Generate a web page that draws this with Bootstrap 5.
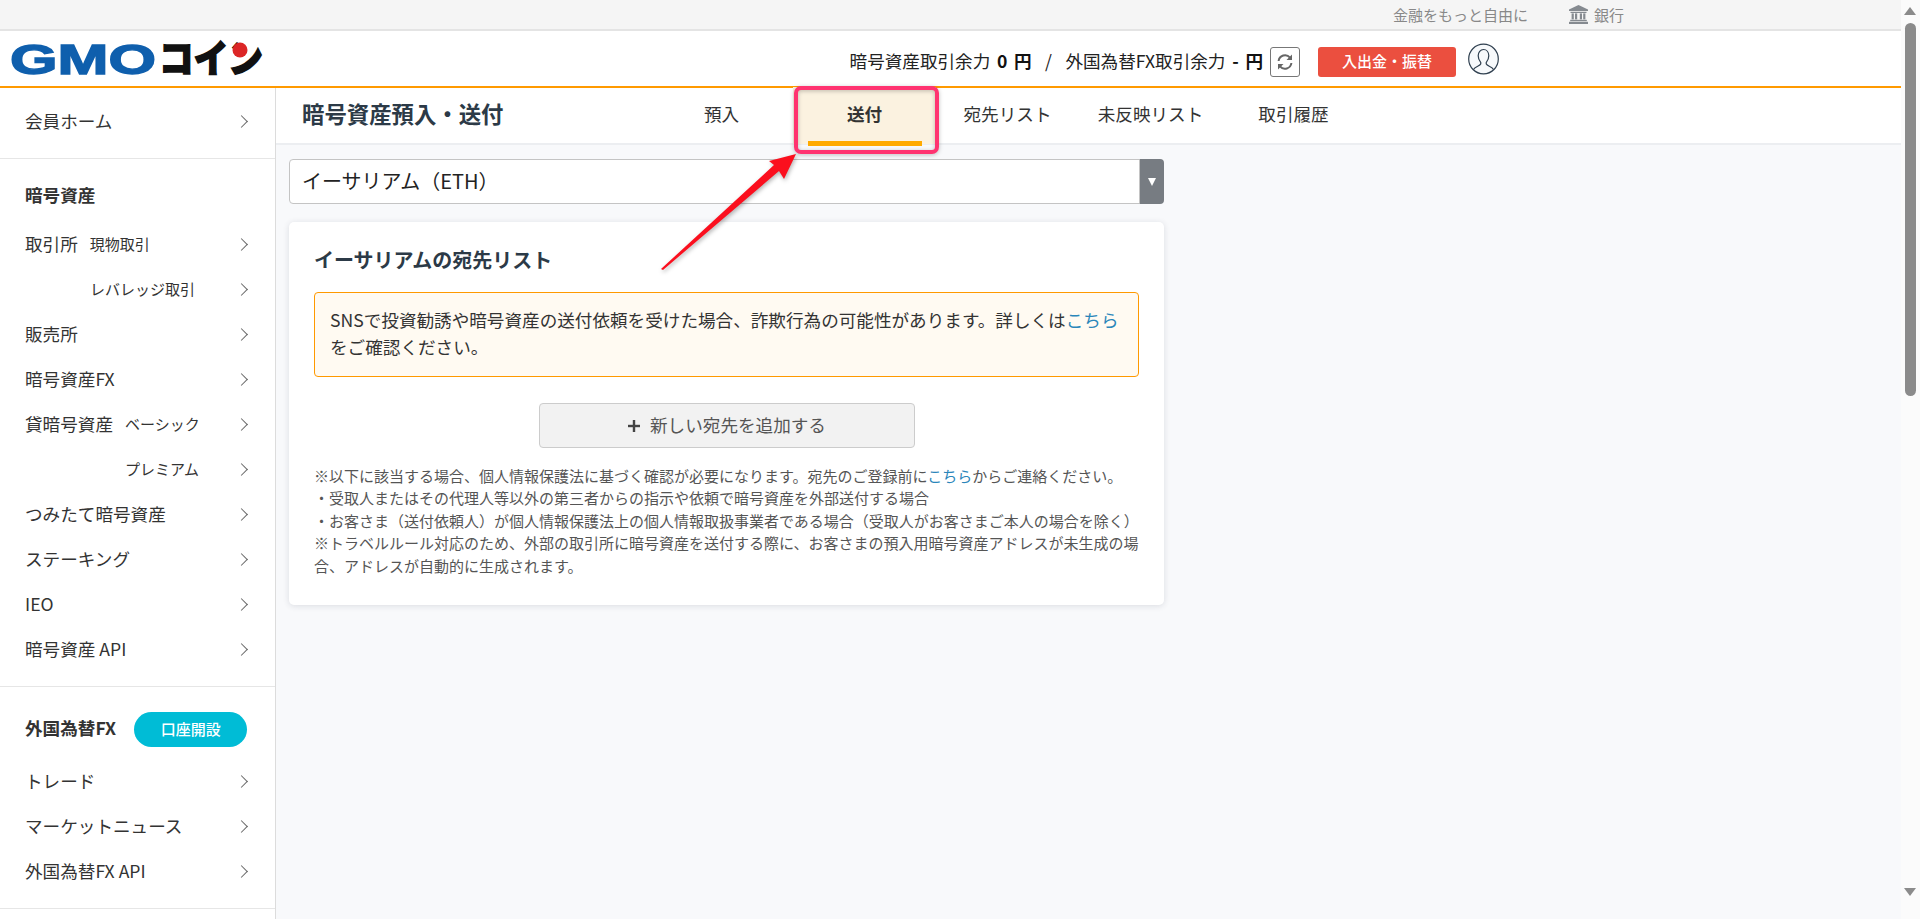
<!DOCTYPE html>
<html lang="ja">
<head>
  <meta charset="UTF-8" />
  <title>暗号資産預入・送付 | GMOコイン</title>
  <link href="https://cdn.jsdelivr.net/npm/bootstrap@5.3.0/dist/css/bootstrap.min.css" rel="stylesheet">
  <style>
    html, body { height: 100%; overflow: hidden; }
    body { font-family: "Noto Sans CJK JP", "Noto Sans", sans-serif; font-size: 17.6px; color: #333; background: #fff; }
    a { text-decoration: none; color: #2a86ba; }

    .app-shell { height: 919px; }
    .app-main { width: 1901px; position: relative; }

    /* fake scrollbar, the window scrolls in the original */
    .fake-scroll { width: 19px; background: #fbfbfb; }
    .fake-thumb { width: 11px; height: 373px; margin: 8px 0 0 4px; background: #8b8b8b; border-radius: 6px; }
    .arrow-up, .arrow-down { width: 0; margin: 7px 0 0 3px; border-left: 6.5px solid transparent; border-right: 6.5px solid transparent; }
    .arrow-up { border-bottom: 8px solid #8b8b8b; }
    .arrow-down { border-top: 8px solid #8b8b8b; margin-top: 492px; }

    .top-strip { height: 31px; background: #f5f5f5; border-bottom: 2px solid #e4e4e4; padding-right: 277px; font-size: 15px; color: #888; line-height: 29px; }
    .strip-bank { margin-left: 41px; }
    .strip-bank svg { margin-right: 6px; }

    .head-bar { height: 57px; border-bottom: 2px solid #ff9a00; padding: 0 402px 0 10px; background: #fff; }
    .logo-svg { overflow: visible; }
    .head-right { margin-top: 6px; }
    .balance { color: #222; margin-right: 7px; white-space: pre; word-spacing: 2.75px; }
    .balance b { color: #111; }
    .btn-refresh { width: 30px; height: 30px; padding: 0; border: 1px solid #777; border-radius: 3px; background: #fff; margin-right: 18px; }
    .btn-deposit { width: 138px; height: 30px; padding: 0; border: 0; border-radius: 3px; background: #eb4f3f; color: #fff; font-size: 15px; font-weight: 500; margin-right: 12px; }
    .btn-deposit:hover { background: #eb4f3f; color: #fff; }
    .user-icon { margin-top: -6px; }

    .side-panel { width: 276px; height: 831px; flex: none; border-right: 1px solid #dcdcdc; background: #fff; overflow: hidden; }
    .side-group { border-bottom: 1px solid #e6e6e6; }
    .side-home { padding: 11px 0 14px; }
    .side-crypto { padding: 14px 0 14px; }
    .side-fx { padding: 19px 0 14px; }
    .side-title { height: 45px; padding-left: 25px; font-weight: 700; margin-bottom: 4px; }
    .side-fx .side-title { margin-bottom: 8px; }
    .side-row { height: 45px; padding: 0 29px 0 25px; color: #333; }
    .side-row::after { content: ""; margin-left: auto; width: 9px; height: 9px; border-top: 1.3px solid #666; border-right: 1.3px solid #666; transform: rotate(45deg); }
    .sub-label { font-size: 15px; margin-left: 12px; }
    .sub-ex { margin-left: 65px; }
    .sub-loan { margin-left: 100px; }
    .btn-open { width: 113px; height: 35px; padding: 0; margin: 2px 0 0 18px; border: 0; border-radius: 18px; background: #00bcd6; color: #fff; font-size: 15px; font-weight: 500; }
    .btn-open:hover { background: #00bcd6; color: #fff; }

    .content-area { background: #f8f9fb; }
    .tab-bar { height: 57px; background: #fff; border-bottom: 2px solid #eceef1; }
    .page-title { width: 374px; padding-left: 26px; font-size: 22.4px; font-weight: 700; margin: -4px 0 0; color: #2c3a47; }
    .tab-link { width: 143px; height: 57px; line-height: 54px; text-align: center; color: #333; }
    .tab-link.is-on { background: #fbf2e0; font-weight: 700; position: relative; }
    .tab-link.is-on::after { content: ""; position: absolute; left: 15px; right: 14px; bottom: -2px; height: 5px; background: #ffaa00; }

    .content-col { width: 875px; margin: 14px 0 0 13px; }
    .coin-select { height: 45px; font-size: 20px; padding: 0 12px 2px; border: 1px solid #c4c4c4; border-radius: 4px 0 0 4px; background-image: none; color: #222; }
    .coin-caret { width: 25px; padding: 0; justify-content: center; background: #777c82; border: 0; border-radius: 0 4px 4px 0; }
    .coin-caret::before { content: ""; border-left: 4.5px solid transparent; border-right: 4.5px solid transparent; border-top: 8px solid #fff; }

    .dest-card { margin-top: 18px; height: 383px; border: 0; border-radius: 5px; box-shadow: 0 1px 6px rgba(40, 50, 70, .14); padding: 25px; }
    .dest-heading { font-size: 20px; font-weight: 700; margin: 0 0 19px; line-height: 26px; color: #2c3a47; }
    .warn-box { height: 85px; margin: 0 0 26px; padding: 14px 15px; background: #fffaf2; border: 1px solid #f90; border-radius: 4px; color: #333; line-height: 26.6px; }
    .warn-box a { color: #2a86ba; }
    .btn-add { display: flex; width: 376px; height: 45px; margin: 0 auto 17px; padding: 0; align-items: center; justify-content: center; background: #f2f2f2; border: 1px solid #ccc; border-radius: 4px; color: #555; font-size: 17.6px; }
    .btn-add svg { margin-right: 9px; }
    .note-text { font-size: 15px; line-height: 22.4px; color: #555; }

    .callout-layer { position: absolute; left: 0; top: 0; pointer-events: none; }
    .callout-arrow { filter: drop-shadow(1px 2px 2px rgba(0, 0, 0, .3)); }
    .callout-box { filter: drop-shadow(0 1px 2px rgba(0, 0, 0, .25)); }
  </style>
</head>
<body>
<div class="app-shell d-flex">
  <div class="app-main">
    <!-- top strip -->
    <div class="top-strip d-flex justify-content-end">
      <span>金融をもっと自由に</span>
      <span class="strip-bank d-flex align-items-center">
        <svg width="19" height="19" viewBox="0 0 19 19" fill="#858a90">
          <path d="M9.5 0 19 4.6V6H0V4.6z"/>
          <rect x="1.5" y="6.8" width="16" height="1.2"/>
          <rect x="2.6" y="8.4" width="2.2" height="6"/><rect x="6" y="8.4" width="2.2" height="6"/>
          <rect x="10.8" y="8.4" width="2.2" height="6"/><rect x="14.2" y="8.4" width="2.2" height="6"/>
          <rect x="1.2" y="14.8" width="16.6" height="1.4"/><rect x="0" y="16.8" width="19" height="2.2"/>
        </svg>銀行
      </span>
    </div>

    <!-- header -->
    <div class="head-bar d-flex align-items-center">
      <svg class="logo-svg" width="253" height="36" viewBox="0 0 253 36">
        <text x="0" y="33" font-family="Liberation Sans" font-weight="700" font-size="42" fill="#0f5fad" stroke="#0f5fad" stroke-width="1.4" textLength="146" lengthAdjust="spacingAndGlyphs">GMO</text>
        <text x="149" y="31" font-family="Noto Sans CJK JP" font-weight="900" font-size="38" fill="#111" stroke="#111" stroke-width="1.6" textLength="104" lengthAdjust="spacingAndGlyphs">コイン</text>
        <circle cx="230" cy="9" r="7.5" fill="#dc2626"/>
      </svg>
      <div class="head-right ms-auto d-flex align-items-center">
        <span class="balance">暗号資産取引余力 <b>0 円</b>  /  外国為替FX取引余力 <b>- 円</b></span>
        <button class="btn-refresh d-flex align-items-center justify-content-center" type="button" aria-label="更新">
          <svg width="18" height="18" viewBox="0 0 18 18" fill="none" stroke="#666" stroke-width="2">
            <path d="M2.6 8A6.5 6.5 0 0 1 14 4.6"/><path d="M15.4 10A6.5 6.5 0 0 1 4 13.4"/>
            <path d="M16 1.5V7h-5.5z" fill="#666" stroke="none"/><path d="M2 16.5V11h5.5z" fill="#666" stroke="none"/>
          </svg>
        </button>
        <button class="btn btn-deposit" type="button">入出金・振替</button>
        <svg class="user-icon" width="31" height="32" viewBox="0 0 31 32" fill="none" stroke="#2f3f4f" stroke-width="1.2">
          <circle cx="15.5" cy="16" r="14.8" fill="#f7f9fb"/>
          <path d="M5.5 26.5c1.4-3 6.3-3.4 7.2-5.4.3-.8.2-1.7-.3-2.3-1.3-1.6-2.2-3.7-2.2-6 0-3.7 2.2-6.3 5.3-6.3s5.3 2.6 5.3 6.3c0 2.3-.9 4.4-2.2 6-.5.6-.6 1.5-.3 2.3.9 2 5.8 2.4 7.2 5.4"/>
        </svg>
      </div>
    </div>

    <div class="d-flex">
      <!-- side menu -->
      <nav class="side-panel">
        <div class="side-group side-home">
          <a class="side-row d-flex align-items-center" href="#">会員ホーム</a>
        </div>
        <div class="side-group side-crypto">
          <div class="side-title d-flex align-items-center">暗号資産</div>
          <a class="side-row d-flex align-items-center" href="#">取引所<span class="sub-label">現物取引</span></a>
          <a class="side-row d-flex align-items-center" href="#"><span class="sub-label sub-ex">レバレッジ取引</span></a>
          <a class="side-row d-flex align-items-center" href="#">販売所</a>
          <a class="side-row d-flex align-items-center" href="#">暗号資産FX</a>
          <a class="side-row d-flex align-items-center" href="#">貸暗号資産<span class="sub-label">ベーシック</span></a>
          <a class="side-row d-flex align-items-center" href="#"><span class="sub-label sub-loan">プレミアム</span></a>
          <a class="side-row d-flex align-items-center" href="#">つみたて暗号資産</a>
          <a class="side-row d-flex align-items-center" href="#">ステーキング</a>
          <a class="side-row d-flex align-items-center" href="#">IEO</a>
          <a class="side-row d-flex align-items-center" href="#">暗号資産 API</a>
        </div>
        <div class="side-group side-fx">
          <div class="side-title d-flex align-items-center">外国為替FX<button class="btn btn-open" type="button">口座開設</button></div>
          <a class="side-row d-flex align-items-center" href="#">トレード</a>
          <a class="side-row d-flex align-items-center" href="#">マーケットニュース</a>
          <a class="side-row d-flex align-items-center" href="#">外国為替FX API</a>
        </div>
      </nav>

      <!-- main content -->
      <main class="content-area flex-grow-1">
        <div class="tab-bar d-flex align-items-center">
          <h1 class="page-title">暗号資産預入・送付</h1>
          <a class="tab-link" href="#">預入</a>
          <a class="tab-link is-on" href="#">送付</a>
          <a class="tab-link" href="#">宛先リスト</a>
          <a class="tab-link" href="#">未反映リスト</a>
          <a class="tab-link" href="#">取引履歴</a>
        </div>

        <div class="content-col">
          <div class="input-group">
            <select class="form-select coin-select">
              <option>イーサリアム（ETH）</option>
            </select>
            <span class="input-group-text coin-caret"></span>
          </div>

          <div class="card dest-card">
            <h2 class="dest-heading">イーサリアムの宛先リスト</h2>
            <div class="alert warn-box">SNSで投資勧誘や暗号資産の送付依頼を受けた場合、詐欺行為の可能性があります。詳しくは<a href="#">こちら</a>をご確認ください。</div>
            <button class="btn btn-add" type="button">
              <svg width="14" height="14" viewBox="0 0 14 14" fill="#444"><rect x="5.8" y="1" width="2.4" height="12"/><rect x="1" y="5.8" width="12" height="2.4"/></svg>新しい宛先を追加する
            </button>
            <div class="note-text">
              ※以下に該当する場合、個人情報保護法に基づく確認が必要になります。宛先のご登録前に<a href="#">こちら</a>からご連絡ください。<br>
              ・受取人またはその代理人等以外の第三者からの指示や依頼で暗号資産を外部送付する場合<br>
              ・お客さま（送付依頼人）が個人情報保護法上の個人情報取扱事業者である場合（受取人がお客さまご本人の場合を除く）<br>
              ※トラベルルール対応のため、外部の取引所に暗号資産を送付する際に、お客さまの預入用暗号資産アドレスが未生成の場合、アドレスが自動的に生成されます。
            </div>
          </div>
        </div>
      </main>
    </div>

    <!-- red annotation drawn over the screenshot -->
    <svg class="callout-layer" width="1901" height="919" viewBox="0 0 1901 919">
      <rect class="callout-box" x="796" y="88" width="141" height="64" rx="5" fill="none" stroke="#ff3370" stroke-width="4"/>
      <polygon class="callout-arrow" points="796,154 784,179 779,171 663,270 661,269 774,165 769,161" fill="#fb0f1e"/>
    </svg>
  </div>

  <div class="fake-scroll">
    <div class="arrow-up"></div>
    <div class="fake-thumb"></div>
    <div class="arrow-down"></div>
  </div>
</div>
<script src="https://cdn.jsdelivr.net/npm/bootstrap@5.3.0/dist/js/bootstrap.bundle.min.js"></script>
</body>
</html>
